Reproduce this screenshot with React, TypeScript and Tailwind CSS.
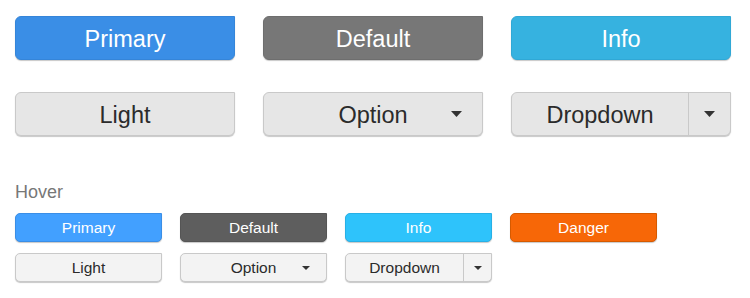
import { ReactNode } from 'react'

type Size = 'lg' | 'sm'

const SIZE = {
  lg: 'h-[44px] w-[220px] text-[23.5px] rounded-[6px]',
  sm: 'h-[29px] w-[147px] text-[15.5px] rounded-[5px]',
}

const TEXT_PAD = {
  lg: 'pt-[4px]',
  sm: 'pt-[1px]',
}

function Caret({ size }: { size: Size }) {
  const w = size === 'lg' ? 11 : 8
  const h = size === 'lg' ? 6 : 4
  return (
    <svg width={w} height={h} viewBox={`0 0 ${w} ${h}`} className="block">
      <polygon points={`0,0 ${w},0 ${w / 2},${h}`} fill="#333" />
    </svg>
  )
}

function Btn({ size, className, children }: { size: Size; className: string; children: ReactNode }) {
  return (
    <button
      type="button"
      className={`${SIZE[size]} relative flex items-center justify-center rounded-tr-none border shadow-[0_1px_1px_rgba(0,0,0,0.22)] ${className}`}
    >
      <span className={TEXT_PAD[size]}>{children}</span>
    </button>
  )
}

const LIGHT = 'border-[#c9c9c9] bg-[#e6e6e6] text-[#2b2b2b]'
const LIGHT_HOVER = 'border-[#c9c9c9] bg-[#f3f3f3] text-[#2b2b2b]'

function Option({ size, hover }: { size: Size; hover?: boolean }) {
  return (
    <Btn size={size} className={hover ? LIGHT_HOVER : LIGHT}>
      Option
      <span className={`absolute top-1/2 -translate-y-1/2 ${size === 'lg' ? 'right-[20px]' : 'right-[16px]'}`}>
        <Caret size={size} />
      </span>
    </Btn>
  )
}

function Dropdown({ size, hover }: { size: Size; hover?: boolean }) {
  return (
    <div
      className={`${SIZE[size]} flex overflow-hidden rounded-tr-none border shadow-[0_1px_1px_rgba(0,0,0,0.22)] ${hover ? LIGHT_HOVER : LIGHT}`}
    >
      <div className={`flex flex-1 items-center justify-center ${TEXT_PAD[size]}`}>Dropdown</div>
      <div
        className={`flex items-center justify-center border-l border-[#c9c9c9] ${size === 'lg' ? 'w-[42px]' : 'w-[28px]'}`}
      >
        <Caret size={size} />
      </div>
    </div>
  )
}

function App() {
  return (
    <main
      className="min-h-screen bg-white px-[15px] pt-[16px] text-white"
      style={{ fontFamily: '"Liberation Sans", Arial, sans-serif' }}
    >
      <div className="flex gap-[28px]">
        <Btn size="lg" className="border-[#3585d9] bg-[#3a8ee6]">Primary</Btn>
        <Btn size="lg" className="border-[#6e6e6e] bg-[#777777]">Default</Btn>
        <Btn size="lg" className="border-[#30a8d6] bg-[#36b2e0]">Info</Btn>
      </div>

      <div className="mt-[32px] flex gap-[28px]">
        <Btn size="lg" className={LIGHT}>Light</Btn>
        <Option size="lg" />
        <Dropdown size="lg" />
      </div>

      <div className="mt-[45px] text-[18px] leading-[22px] text-[#777]">Hover</div>

      <div className="mt-[10px] flex gap-[18px]">
        <Btn size="sm" className="border-[#3a8ee6] bg-[#42a0ff]">Primary</Btn>
        <Btn size="sm" className="border-[#555] bg-[#5e5e5e]">Default</Btn>
        <Btn size="sm" className="border-[#27b0e6] bg-[#2ec3fb]">Info</Btn>
        <Btn size="sm" className="border-[#d65a00] bg-[#f76707]">Danger</Btn>
      </div>

      <div className="mt-[11px] flex gap-[18px]">
        <Btn size="sm" className={LIGHT_HOVER}>Light</Btn>
        <Option size="sm" hover />
        <Dropdown size="sm" hover />
      </div>
    </main>
  )
}

export default App
